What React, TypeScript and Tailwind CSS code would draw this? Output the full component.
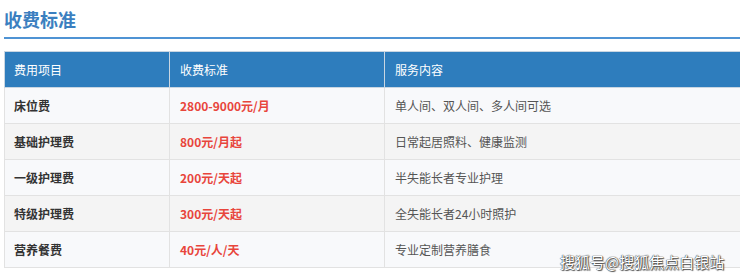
import React from "react";

const rows = [
  { item: "床位费", price: "2800-9000元/月", desc: "单人间、双人间、多人间可选" },
  { item: "基础护理费", price: "800元/月起", desc: "日常起居照料、健康监测" },
  { item: "一级护理费", price: "200元/天起", desc: "半失能长者专业护理" },
  { item: "特级护理费", price: "300元/天起", desc: "全失能长者24小时照护" },
  { item: "营养餐费", price: "40元/人/天", desc: "专业定制营养膳食" },
];

export default function App() {
  return (
    <div
      className="relative w-[740px] h-[278px] overflow-hidden bg-white"
      style={{ fontFamily: '"Noto Sans CJK SC", "Noto Sans", sans-serif' }}
    >
      <div className="pl-1 pt-[6px]">
        <h2 className="text-[18px] font-bold leading-[26px] text-[#3b7fc0]">收费标准</h2>
      </div>
      <div className="ml-1 mt-[5px] h-[2px] bg-[#4f93d4]" />

      <table className="ml-1 mt-[12px] w-[760px] border-collapse text-[12px]">
        <thead>
          <tr className="h-[36px] bg-[#2e7dbd] text-white">
            <th className="w-[165px] border border-[#c9d6e2] pl-[9px] text-left font-normal">费用项目</th>
            <th className="w-[215px] border border-[#c9d6e2] pl-[10px] text-left font-normal">收费标准</th>
            <th className="border border-[#c9d6e2] pl-[10px] text-left font-normal">服务内容</th>
          </tr>
        </thead>
        <tbody>
          {rows.map((r, i) => (
            <tr key={r.item} className={`h-[36px] ${i % 2 === 0 ? "bg-[#f8f9fb]" : "bg-[#f4f4f4]"}`}>
              <td className="border border-[#e2e2e2] pl-[9px] font-bold text-[#333]">{r.item}</td>
              <td className="border border-[#e2e2e2] pl-[10px] font-bold text-[#e8453c]">{r.price}</td>
              <td className="border border-[#e2e2e2] pl-[10px] text-[#555]">{r.desc}</td>
            </tr>
          ))}
        </tbody>
      </table>

      <div
        className="absolute left-[560px] top-[251px] text-[15px] leading-[22px] text-white"
        style={{ textShadow: "0 0 1px #333, 0 0 1px #333, 1px 1px 1px #555" }}
      >
        搜狐号@搜狐焦点白银站
      </div>
    </div>
  );
}
